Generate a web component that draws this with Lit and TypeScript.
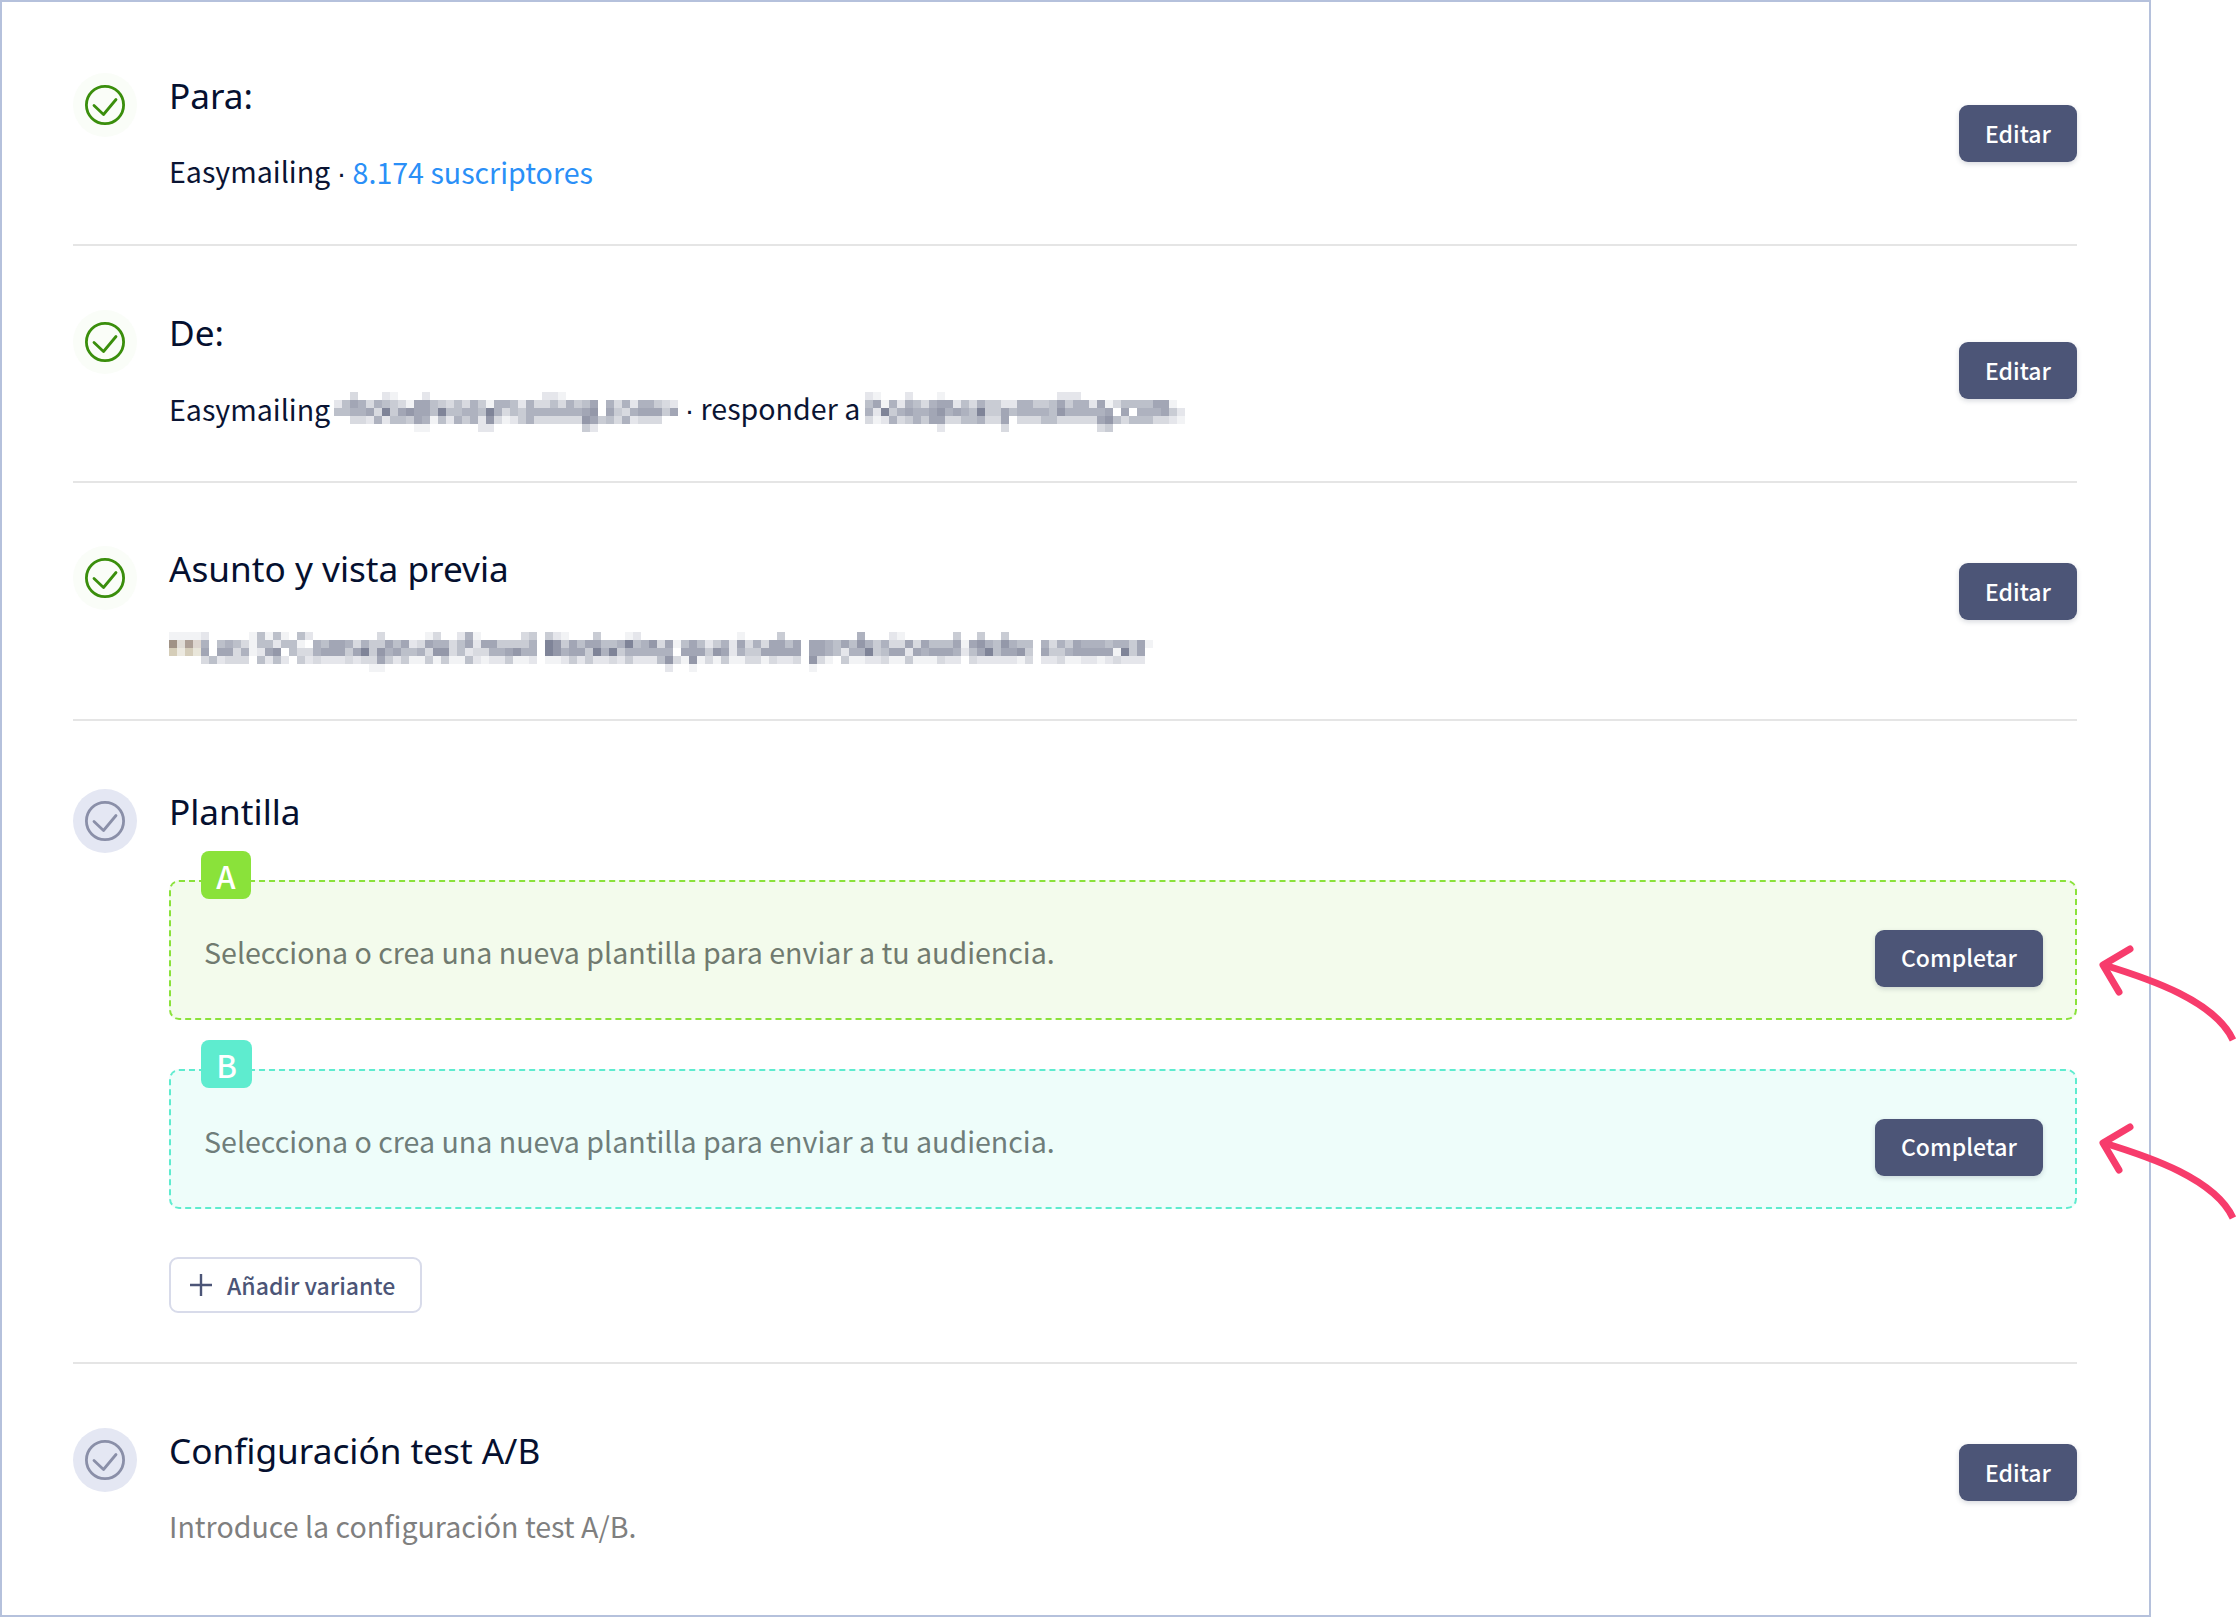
import { LitElement, html, css, svg } from "lit";
import { customElement } from "lit/decorators.js";

const SHADES: Record<string, string> = {
  "1": "#f2f3f5", "2": "#e5e6eb", "3": "#d8dae0", "4": "#c9ccd4", "5": "#bcc0ca",
  "6": "#aeb2bf", "7": "#a2a6b5", "8": "#9498a9", "9": "#7f8498",
  a: "#a09286", b: "#e0dcd6", c: "#ad9f96", d: "#ded6d0",
  e: "#d5cdb8", f: "#ece9e0", g: "#d5cdba", h: "#e9e6da",
};

const M1 = [
  "00300021000200000000000000221",
  "2576365431" + "7754353641" + "6652633536" + "4570636266432",
  "5566739478" + "7759556659" + "6354666666" + "6780743677747",
  "0033262554" + "7615264628" + "3124633333" + "3874536233300",
  "0000000000" + "1100000022" + "0000000000" + "0420000000000",
];
const M2 = [
  "2100020001" + "00000000000000" + "222",
  "5716265367" + "7253644226" + "6445746627" + "1355557710",
  "6294676678" + "6765944756" + "6665866666" + "7070666742",
  "3126346477" + "3355633703" + "3355333337" + "8535553321",
  "0000000002" + "0000000300" + "0000000003" + "4",
];
const M3 = [
  "1111200000" + "1515105200" + "0000003000" + "0013002610" + "0000340421" + "0004000120" + "0000000000" + "0100004000" + "0000006000" + "2100000040" + "0400400000",
  "abcd605653" + "1552551065" + "7763644757" + "2376635727" + "7444460984" + "7577556956" + "83" + "7157524627" + "3637757077" + "6575864633" + "7375557178" + "6586550636" + "4766656647" + "1",
  "efgh707736" + "1278053367" + "7747948675" + "5638835233" + "6678660986" + "7749694666" + "66" + "6077748726" + "4477777077" + "6526694577" + "2767776257" + "9577840744" + "6777771947" + "0",
  "0000352333" + "0525204232" + "2232337424" + "1141411521" + "2241120112" + "4242232422" + "25" + "8318131411" + "3313223083" + "1041122311" + "4111322032" + "2222130223" + "1122123222" + "0",
  "0000000000" + "0000000000" + "0000011000" + "0000000000" + "0000000000" + "0000000000" + "0020010000" + "0000000000" + "1",
];

function mosaic(rows: string[], cols: number) {
  const cell = 8;
  return html`<svg class="mosaic" width=${cols * cell} height=${rows.length * cell} viewBox="0 0 ${cols * cell} ${rows.length * cell}" shape-rendering="crispEdges" aria-hidden="true">
    ${rows.map((r, y) => [...r].map((c, x) => (SHADES[c] ? svg`<rect x=${x * cell} y=${y * cell} width=${cell} height=${cell} fill=${SHADES[c]}></rect>` : null)))}
  </svg>`;
}

const checkIcon = html`<svg width="40" height="40" viewBox="0 0 40 40" fill="none" stroke="currentColor" stroke-width="2.8">
  <circle cx="20" cy="20" r="18.6"></circle>
  <path d="M9 20.5l9.5 9L31 14.5" stroke-linecap="round" stroke-linejoin="round"></path>
</svg>`;

@customElement("app-root")
export class AppRoot extends LitElement {
  static styles = css`
    :host { display: block; position: relative; width: 2236px; height: 1617px; overflow: hidden; background: #fff; font-family: "Noto Sans CJK SC", sans-serif; color: #0a1433; }
    * { box-sizing: border-box; }
    .panel { width: 2151px; height: 1617px; border: 2px solid #b5c1dc; padding: 0 72px 0 71px; }
    .row { display: flex; align-items: flex-start; border-bottom: 2px solid #e5e5e5; }
    .r1 { padding-top: 71px; height: 244px; }
    .r2 { padding-top: 64px; height: 237px; }
    .r3 { padding-top: 63px; height: 238px; }
    .r4 { padding-top: 68px; height: 643px; }
    .r5 { padding-top: 64px; border-bottom: 0; }
    .status { flex: none; width: 64px; height: 64px; border-radius: 50%; display: flex; align-items: center; justify-content: center; }
    .done { background: #fafdf8; color: #3a8e0c; }
    .todo { background: #e4e7f3; color: #8a8fa8; }
    .body { flex: 1; min-width: 0; margin-left: 32px; }
    .title { font-family: "Noto Sans", sans-serif; font-size: 35.2px; line-height: 48px; color: #05102f; margin-top: -2px; }
    .sub { font-size: 28.6px; line-height: 48px; height: 48px; margin-top: 28px; white-space: nowrap; display: flex; align-items: center; }
    .r1 .sub, .r2 .sub { margin-top: 29px; }
    .sub > span { white-space: pre; }
    .link { color: #2a8ff7; }
    .dot { font-family: "Liberation Sans", sans-serif; }
    .muted { color: #7f7f7f; }
    .mosaic { flex: none; display: block; }
    .m-l { margin-left: 4px; margin-top: 6px; }
    .m-r { margin-left: 5px; margin-top: 6px; }
    .m-s { margin-top: 16px; }
    .btn { flex: none; height: 57px; border: 0; border-radius: 9px; background: #4c5577; color: #fff; font-family: inherit; font-size: 23px; font-weight: 500; padding: 0 0 2px; box-shadow: 0 2px 5px rgba(40, 50, 80, 0.18); display: flex; align-items: center; justify-content: center; }
    .edit { width: 118px; }
    .complete { width: 168px; margin-top: 16px; }
    .e1 { margin-top: 32px; }
    .e2 { margin-top: 32px; }
    .e3 { margin-top: 17px; }
    .e5 { margin-top: 16px; }
    .variants { display: flex; flex-direction: column; margin-top: 45px; }
    .box { position: relative; height: 140px; border-radius: 10px; border: 2px dashed; display: flex; align-items: center; justify-content: space-between; padding: 0 32px 0 33px; font-size: 28.6px; color: #707a6f; }
    .box + .box { margin-top: 49px; }
    .msg { margin-top: 3px; }
    .a { background: #f3fbec; border-color: #8ae23a; }
    .b { background: #eefdfa; border-color: #5eeccf; color: #6f7d7a; }
    .badge { position: absolute; left: 30px; top: -31px; width: 50px; height: 48px; border-radius: 8px; color: #fff; font-size: 31px; font-weight: 500; display: flex; align-items: center; justify-content: center; }
    .a .badge { background: #8ae23a; }
    .b .badge { background: #5eeccf; width: 51px; }
    .add { align-self: flex-start; margin-top: 48px; width: 253px; height: 56px; border: 2px solid #d8dbea; border-radius: 9px; background: #fff; color: #4c5577; font-family: inherit; font-size: 23px; font-weight: 500; padding: 0 0 0 19px; display: flex; align-items: center; gap: 15px; }
    .arrows { position: absolute; left: 0; top: 0; pointer-events: none; }
  `;

  private status(done: boolean) {
    return html`<div class="status ${done ? "done" : "todo"}">${checkIcon}</div>`;
  }

  render() {
    return html`
      <div class="panel">
        <section class="row r1">
          ${this.status(true)}
          <div class="body">
            <div class="title">Para:</div>
            <div class="sub"><span>Easymailing <span class="dot">·</span> </span><span class="link">8.174 suscriptores</span></div>
          </div>
          <button class="btn edit e1">Editar</button>
        </section>
        <section class="row r2">
          ${this.status(true)}
          <div class="body">
            <div class="title">De:</div>
            <div class="sub"><span>Easymailing</span><span class="m-l">${mosaic(M1, 43)}</span><span> <span class="dot">·</span> responder a</span><span class="m-r">${mosaic(M2, 40)}</span></div>
          </div>
          <button class="btn edit e2">Editar</button>
        </section>
        <section class="row r3">
          ${this.status(true)}
          <div class="body">
            <div class="title">Asunto y vista previa</div>
            <div class="sub"><span class="m-s">${mosaic(M3, 123)}</span></div>
          </div>
          <button class="btn edit e3">Editar</button>
        </section>
        <section class="row r4">
          ${this.status(false)}
          <div class="body">
            <div class="title">Plantilla</div>
            <div class="variants">
              <div class="box a">
                <div class="badge">A</div>
                <span class="msg">Selecciona o crea una nueva plantilla para enviar a tu audiencia.</span>
                <button class="btn complete">Completar</button>
              </div>
              <div class="box b">
                <div class="badge">B</div>
                <span class="msg">Selecciona o crea una nueva plantilla para enviar a tu audiencia.</span>
                <button class="btn complete">Completar</button>
              </div>
              <button class="add">
                <svg width="22" height="22" viewBox="0 0 22 22" stroke="currentColor" stroke-width="2.4"><path d="M11 0v22M0 11h22"></path></svg>
                Añadir variante
              </button>
            </div>
          </div>
        </section>
        <section class="row r5">
          ${this.status(false)}
          <div class="body">
            <div class="title">Configuración test A/B</div>
            <div class="sub muted">Introduce la configuración test A/B.</div>
          </div>
          <button class="btn edit e5">Editar</button>
        </section>
      </div>
      <svg class="arrows" width="2236" height="1617" viewBox="0 0 2236 1617" fill="none" stroke="#f73c6c" stroke-width="7">
        ${[0, 178].map((dy) => svg`<g transform="translate(0 ${dy})">
          <path d="M2104 965C2150 979 2215 1001 2233 1040"></path>
          <path d="M2130 949L2103 965L2119 992" stroke-linecap="round" stroke-linejoin="round"></path>
        </g>`)}
      </svg>
    `;
  }
}
